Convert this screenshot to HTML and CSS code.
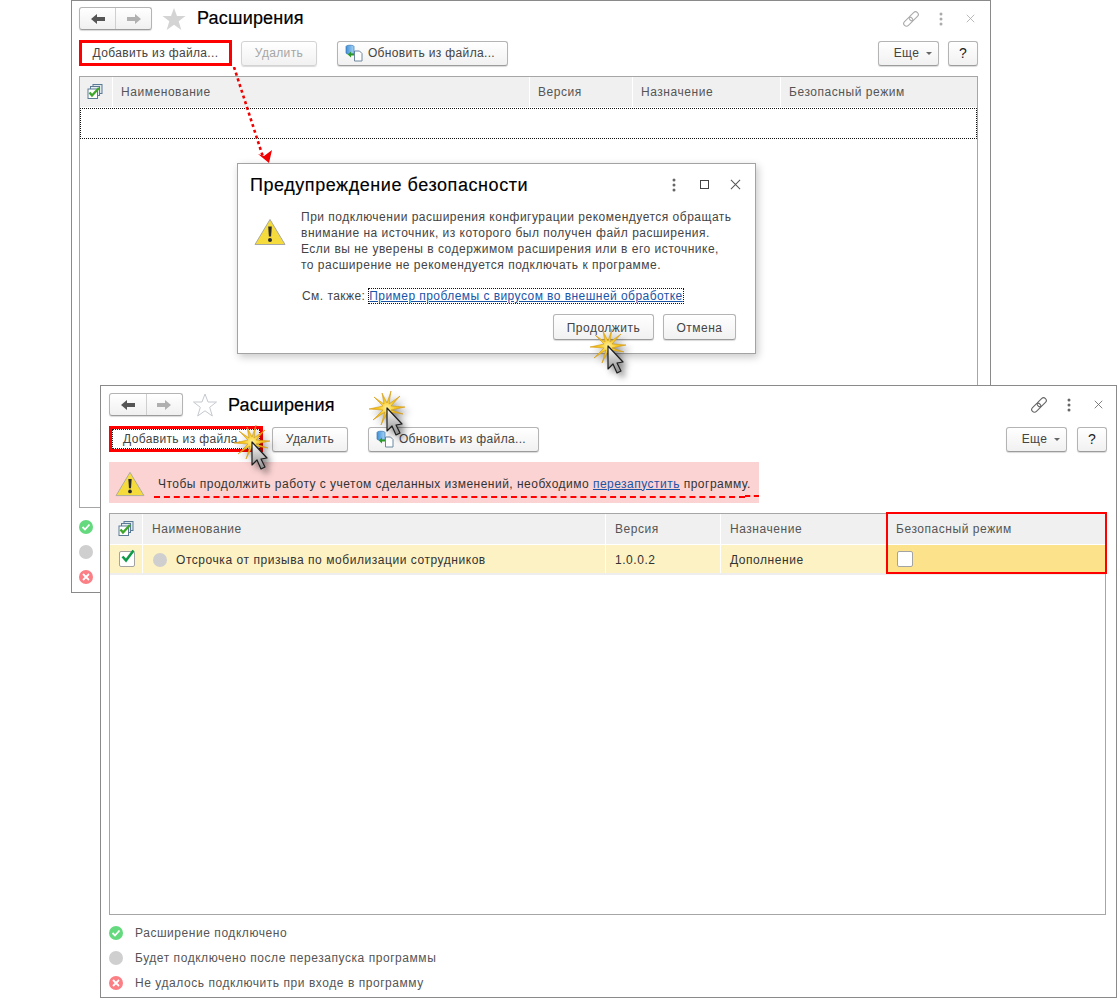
FILE: index.html
```html
<!DOCTYPE html>
<html lang="ru">
<head>
<meta charset="utf-8">
<title>Расширения</title>
<link rel="stylesheet" href="styles.css">
</head>
<body>
<svg class="defs" aria-hidden="true">
  <defs>
    <linearGradient id="curs" x1="0" y1="0" x2="0" y2="1"><stop offset="0" stop-color="#fff"/><stop offset="1" stop-color="#8a8a8a"/></linearGradient>
    <radialGradient id="burst"><stop offset="0" stop-color="#fff09a"/><stop offset="0.45" stop-color="#f6c822"/><stop offset="1" stop-color="#e5a00c"/></radialGradient>
    <linearGradient id="db" x1="0" y1="0" x2="1" y2="0"><stop offset="0" stop-color="#3f8fd8"/><stop offset="1" stop-color="#a8d4f5"/></linearGradient>
    <symbol id="i-pointer" viewBox="0 0 50 50">
      <polygon points="38,19 24,18 33,8 22,16 24,3 20,15 15,5 17,16 7,9 16,18 2,21 16,22 6,32 18,24 14,37 20,25 24,34 23,24 36,26 24,22" fill="url(#burst)" stroke="#d49a10" stroke-width=".6"/>
      <path d="M20 20V43L25 38L29 47L33 45L29 37L35 36Z" fill="url(#curs)" stroke="#1d1d1d" stroke-width="1.2" stroke-linejoin="round"/>
    </symbol>
    <symbol id="i-warn" viewBox="0 0 32 28">
      <path d="M16 1.5L31 26.5H1Z" fill="#f5dc3c" stroke="#a8a8a0" stroke-width="1" stroke-linejoin="round"/>
      <path d="M14.2 8.5h3.6l-.7 10h-2.2z" fill="#2c2c2c"/><circle cx="16" cy="22" r="2" fill="#2c2c2c"/>
    </symbol>
    <symbol id="i-left" viewBox="0 0 16 12"><path d="M1 6L7 1V4H15V8H7V11Z" fill="currentColor"/></symbol>
    <symbol id="i-right" viewBox="0 0 16 12"><path d="M15 6L9 1V4H1V8H9V11Z" fill="currentColor"/></symbol>
    <symbol id="i-star" viewBox="0 0 24 24"><path d="M12 1l3 8h8.500l-6.800 5.300 2.600 8.700L12 17.800 4.700 23l2.600-8.700L.5 9H9z"/></symbol>
    <symbol id="i-link" viewBox="0 0 18 18" fill="none" stroke="currentColor" stroke-width="1.100">
      <rect x="1" y="9" width="10.500" height="5.500" rx="2.750" transform="rotate(-45 6.250 11.750)"/>
      <rect x="6.500" y="3.500" width="10.500" height="5.500" rx="2.750" transform="rotate(-45 11.750 6.250)"/>
    </symbol>
    <symbol id="i-dots" viewBox="0 0 4 14"><circle cx="2" cy="2" r="1.500" fill="currentColor"/><circle cx="2" cy="7" r="1.500" fill="currentColor"/><circle cx="2" cy="12" r="1.500" fill="currentColor"/></symbol>
    <symbol id="i-close" viewBox="0 0 12 12"><path d="M1 1L11 11M11 1L1 11" stroke="currentColor" stroke-width="1.100" fill="none"/></symbol>
    <symbol id="i-update" viewBox="0 0 18 18">
      <path d="M9.500 7h5l2.500 2.500V17H9.500Z" fill="#fff" stroke="#6d87a0"/>
      <path d="M1 2.500C1 .8 9 .8 9 2.500V9C9 10.700 1 10.700 1 9Z" fill="url(#db)" stroke="#3a78b5" stroke-width=".7"/>
      <path d="M6 7.500L2.800 10.500L6 13.500V11.500H9V9.500H6Z" fill="#2b9a2b"/>
    </symbol>
    <symbol id="i-checkall" viewBox="0 0 16 16">
      <rect x="6" y=".5" width="9" height="9" fill="#dfe6ec" stroke="#5b7a96"/>
      <rect x="3.500" y="2.500" width="9" height="9" fill="#e8edf1" stroke="#5b7a96"/>
      <rect x="1" y="5" width="9.500" height="9.500" fill="#fff" stroke="#5b7a96"/>
      <path d="M2.500 8.500L5 11.500L12 4" fill="none" stroke="#3fa62c" stroke-width="2.400"/>
    </symbol>
    <symbol id="i-tick" viewBox="0 0 16 16"><path d="M3.500 7.500L7 11.500L14.500 1.500" fill="none" stroke="#0f9a4a" stroke-width="2.600"/></symbol>
    <symbol id="i-ok" viewBox="0 0 14 14"><circle cx="7" cy="7" r="7" fill="#64d97e"/><path d="M3.500 7L6 9.500L10.500 4.500" fill="none" stroke="#fff" stroke-width="1.800"/></symbol>
    <symbol id="i-wait" viewBox="0 0 14 14"><circle cx="7" cy="7" r="7" fill="#cfcfcf"/></symbol>
    <symbol id="i-fail" viewBox="0 0 14 14"><circle cx="7" cy="7" r="7" fill="#fb7f84"/><path d="M4 4L10 10M10 4L4 10" fill="none" stroke="#fff" stroke-width="1.800"/></symbol>
  </defs>
</svg>

<section class="window window-back">
  <header class="win-head">
    <div class="nav"><span class="nav-btn back"><svg class="ic-arrow"><use href="#i-left"/></svg></span><span class="nav-btn fwd"><svg class="ic-arrow"><use href="#i-right"/></svg></span></div>
    <svg class="ic-star star-solid"><use href="#i-star"/></svg>
    <h1 class="win-title">Расширения</h1>
    <div class="win-tools muted">
      <svg class="ic-link"><use href="#i-link"/></svg>
      <svg class="ic-dots"><use href="#i-dots"/></svg>
      <svg class="ic-close"><use href="#i-close"/></svg>
    </div>
  </header>
  <div class="toolbar">
    <button class="btn flagged w-add">Добавить из файла...</button>
    <button class="btn disabled w-del">Удалить</button>
    <button class="btn w-upd gap-lg"><svg class="ic-update"><use href="#i-update"/></svg>Обновить из файла...</button>
    <span class="spring"></span>
    <button class="btn w-more">Еще<i class="caret"></i></button>
    <button class="btn w-help">?</button>
  </div>
  <div class="table table-back">
    <div class="thead cols-back">
      <div class="th th-icon"><svg class="ic-checkall"><use href="#i-checkall"/></svg></div>
      <div class="th">Наименование</div><div class="th">Версия</div><div class="th">Назначение</div><div class="th">Безопасный режим</div>
    </div>
    <div class="empty-row"></div>
  </div>
  <div class="legend legend-back">
    <div class="legend-row"><svg class="ic-state"><use href="#i-ok"/></svg></div>
    <div class="legend-row"><svg class="ic-state"><use href="#i-wait"/></svg></div>
    <div class="legend-row"><svg class="ic-state"><use href="#i-fail"/></svg></div>
  </div>
</section>

<section class="dialog">
  <header class="dlg-head">
    <h2 class="dlg-title">Предупреждение безопасности</h2>
    <svg class="ic-dots"><use href="#i-dots"/></svg>
    <span class="ic-square"></span>
    <svg class="ic-close ic-close-lg"><use href="#i-close"/></svg>
  </header>
  <div class="dlg-body">
    <svg class="ic-warn"><use href="#i-warn"/></svg>
    <div class="dlg-text">
      <p class="dlg-para">При подключении расширения конфигурации рекомендуется обращать<br>внимание на источник, из которого был получен файл расширения.<br>Если вы не уверены в содержимом расширения или в его источнике,<br>то расширение не рекомендуется подключать к программе.</p>
      <p class="dlg-see">См. также: <a class="link link-focus">Пример проблемы с вирусом во внешней обработке</a></p>
    </div>
  </div>
  <div class="dlg-actions">
    <button class="btn w-cont">Продолжить</button>
    <button class="btn w-cancel">Отмена</button>
  </div>
</section>

<section class="window window-front">
  <header class="win-head">
    <div class="nav"><span class="nav-btn back"><svg class="ic-arrow"><use href="#i-left"/></svg></span><span class="nav-btn fwd"><svg class="ic-arrow"><use href="#i-right"/></svg></span></div>
    <svg class="ic-star star-line"><use href="#i-star"/></svg>
    <h1 class="win-title">Расширения</h1>
    <div class="win-tools">
      <svg class="ic-link"><use href="#i-link"/></svg>
      <svg class="ic-dots"><use href="#i-dots"/></svg>
      <svg class="ic-close"><use href="#i-close"/></svg>
    </div>
  </header>
  <div class="toolbar">
    <button class="btn flagged w-add2"><span class="focus-ring">Добавить из файла...</span></button>
    <button class="btn w-del">Удалить</button>
    <button class="btn w-upd gap-lg"><svg class="ic-update"><use href="#i-update"/></svg>Обновить из файла...</button>
    <span class="spring"></span>
    <button class="btn w-more">Еще<i class="caret"></i></button>
    <button class="btn w-help gap-help">?</button>
  </div>
  <div class="notice">
    <svg class="ic-warn ic-warn-sm"><use href="#i-warn"/></svg>
    <span class="notice-text">Чтобы продолжить работу с учетом сделанных изменений, необходимо <a class="link">перезапустить</a> программу.</span>
    <i class="dash dash-main"></i><i class="dash dash-tail"></i>
  </div>
  <div class="table table-front">
    <div class="thead cols-front">
      <div class="th th-icon"><svg class="ic-checkall"><use href="#i-checkall"/></svg></div>
      <div class="th">Наименование</div><div class="th">Версия</div><div class="th">Назначение</div><div class="th">Безопасный режим</div>
    </div>
    <div class="trow cols-front">
      <div class="td td-icon"><span class="checkbox"><svg class="ic-tick"><use href="#i-tick"/></svg></span></div>
      <div class="td"><svg class="ic-state ic-row"><use href="#i-wait"/></svg>Отсрочка от призыва по мобилизации сотрудников</div>
      <div class="td">1.0.0.2</div>
      <div class="td">Дополнение</div>
      <div class="td td-hot"><span class="checkbox"></span></div>
    </div>
    <div class="red-col"></div>
  </div>
  <div class="legend">
    <div class="legend-row"><svg class="ic-state"><use href="#i-ok"/></svg>Расширение подключено</div>
    <div class="legend-row"><svg class="ic-state"><use href="#i-wait"/></svg>Будет подключено после перезапуска программы</div>
    <div class="legend-row"><svg class="ic-state"><use href="#i-fail"/></svg>Не удалось подключить при входе в программу</div>
  </div>
</section>

<svg class="arrow" viewBox="0 0 50 110" aria-hidden="true">
  <path d="M4 0L33 90" stroke="#f00000" stroke-width="2.600" stroke-dasharray="3 3" fill="none"/>
  <path d="M39 96L28 87L34 89L42 83Z" fill="#f00000"/>
</svg>
<svg class="pointer p-dialog" aria-hidden="true"><use href="#i-pointer"/></svg>
<svg class="pointer p-title" aria-hidden="true"><use href="#i-pointer"/></svg>
<svg class="pointer p-add" aria-hidden="true"><use href="#i-pointer"/></svg>
</body>
</html>
```

FILE: styles.css
```css
* { box-sizing: border-box; }
html, body { margin: 0; padding: 0; }
body {
  position: relative;
  width: 1118px;
  height: 1001px;
  overflow: hidden;
  background: #fff;
  color: #444;
  font-family: "Liberation Sans", Arial, sans-serif;
  font-size: 12px;
  letter-spacing: .55px;
}
.defs { position: absolute; width: 0; height: 0; }

/* windows on the canvas */
.window { position: absolute; background: #fff; border: 1px solid #8a8a8a; }
.window-back { left: 71px; top: 0; width: 920px; height: 593px; padding: 6px 12px 0 7px; }
.window-front { left: 100px; top: 385px; width: 1017px; height: 613px; padding: 7px 9px 0 8px; }

.win-head { display: flex; align-items: center; height: 23px; }
.nav { display: flex; width: 74px; height: 23px; border: 1px solid #b4b4b4; border-bottom-color: #9c9c9c; border-radius: 3px; background: linear-gradient(#fff, #f0f0f0); box-shadow: 0 1px 1px rgba(0,0,0,.15); }
.window-back .nav { width: 73px; }
.nav-btn { flex: 1; display: flex; align-items: center; justify-content: center; }
.nav-btn + .nav-btn { border-left: 1px solid #cfcfcf; }
.back { color: #555; }
.fwd { color: #b0b0b0; }
.ic-arrow { width: 16px; height: 12px; }
.ic-star { width: 24px; height: 24px; margin-left: 10px; flex: none; }
.star-solid { fill: #d4d4d4; }
.star-line { fill: #fff; stroke: #c4c9d0; stroke-width: 1; }
.win-title { margin: 1px 0 0 11px; font-size: 18px; font-weight: 400; letter-spacing: .2px; color: #000; line-height: 23px; -webkit-text-stroke: .2px #000; }
.window-back .win-title { margin-top: 0; }
.win-tools { margin-left: auto; display: flex; align-items: center; color: #666; }
.muted { color: #ababab; }
.ic-link { width: 18px; height: 18px; }
.ic-dots { width: 4px; height: 14px; margin-left: 19px; }
.ic-close { width: 9px; height: 9px; margin-left: 23px; margin-right: 4px; }
.muted .ic-close { margin-left: 23px; margin-right: 3px; }

/* toolbar */
.toolbar { display: flex; align-items: center; height: 26px; margin-top: 10px; letter-spacing: .35px; }
.btn {
  display: inline-flex; align-items: center; justify-content: center;
  height: 25px; padding: 0; flex: none;
  border: 1px solid #b4b4b4; border-bottom-color: #9c9c9c; border-radius: 3px;
  background: linear-gradient(#fff, #f1f1f1);
  box-shadow: 0 1px 1px rgba(0,0,0,.15);
  font: inherit; letter-spacing: inherit; color: #444;
}
.btn.disabled { color: #a6a6a6; border-color: #d3d3d3; }
.btn.flagged { height: 26px; border: 3px solid #f00; border-radius: 0; box-shadow: none; background: #fff; }
.w-add { width: 153px; }
.w-add2 { width: 154px; padding: 0; }
.w-del { width: 76px; margin-left: 9px; }
.w-upd { width: 171px; padding-right: 5px; }
.gap-lg { margin-left: 20px; }
.w-more { width: 61px; padding-left: 9px; }
.w-help { width: 30px; margin-left: 9px; color: #222; font-size: 14px; }
.gap-help { margin-left: 10px; }
.spring { flex: 1; }
.ic-update { width: 18px; height: 18px; margin-right: 5px; }
.caret { width: 0; height: 0; margin-left: 7px; border: 3px solid transparent; border-top: 3px solid #666; border-bottom: 0; }
.focus-ring { display: flex; align-items: center; justify-content: center; width: 148px; height: 20px; border: 1px dotted #222; }

/* tables */
.table { position: relative; margin-top: 10px; border: 1px solid #a6a6a6; background: #fff; }
.table-back { height: 432px; }
.table-front { height: 402px; margin-top: 10px; margin-right: 1px; }
.thead, .trow { display: grid; }
.cols-back { grid-template-columns: 33px 417px 103px 148px 1fr; }
.cols-front { grid-template-columns: 33px 463px 115px 166px 1fr; }
.thead { height: 30px; }
.th { display: flex; align-items: center; padding-left: 8px; background: #f0f0f0; border-right: 1px solid #fff; color: #555; }
.cols-front .th { padding-left: 9px; }
.th:last-child { border-right: 0; }
.cols-front .th-icon, .th-icon { padding-left: 7px; }
.cols-front .th-icon { padding-left: 8px; }
.ic-checkall { width: 16px; height: 16px; }
.empty-row { height: 31px; margin-top: 1px; border: 1px dotted #111; }
.trow { height: 28px; margin-top: 1px; border-bottom: 2px solid #eee; box-sizing: content-box; }
.td { display: flex; align-items: center; padding: 1px 0 0 9px; background: #fdf2c4; border-right: 1px solid #fff; color: #333; }
.td:last-child { border-right: 0; }
.td-icon { padding: 0 0 0 9px; }
.td-hot { background: #fde28c; padding: 0 0 0 10px; }
.checkbox { position: relative; display: block; width: 16px; height: 16px; background: #fff; border: 1px solid #a3a3a3; border-radius: 2px; }
.ic-tick { position: absolute; left: -1px; top: -3px; width: 16px; height: 16px; }
.ic-state { width: 14px; height: 14px; flex: none; margin-right: 12px; }
.ic-row { margin-left: 1px; margin-right: 9px; }
.red-col { position: absolute; right: -2px; top: -2px; width: 221px; height: 62px; border: 2px solid #f00; }

/* legend */
.legend { margin-top: 5px; }
.legend-row { display: flex; align-items: center; height: 25px; color: #555; }
.legend-back { margin-top: 6px; }

/* notice */
.notice { position: relative; display: flex; align-items: center; width: 650px; height: 41px; margin-top: 10px; padding-left: 6px; background: #fbd3d3; color: #333; letter-spacing: .48px; }
.ic-warn { width: 32px; height: 28px; flex: none; }
.ic-warn-sm { width: 30px; height: 26px; margin-top: 2px; }
.notice-text { margin-left: 13px; margin-top: 2px; white-space: nowrap; }
.dash { position: absolute; border-top: 2px dashed #f00; }
.dash-main { left: 45px; top: 34px; width: 591px; }
.dash-tail { left: 636px; top: 33px; width: 14px; }
.link { color: #1a55a8; text-decoration: underline; }
.link-focus { outline: 1px dotted #111; }

/* dialog */
.dialog { position: absolute; left: 237px; top: 163px; width: 519px; height: 191px; background: #fff; border: 1px solid #a3a3a3; box-shadow: 2px 3px 8px rgba(0,0,0,.22); letter-spacing: .5px; }
.dlg-head { display: flex; align-items: center; height: 41px; padding: 0 14px 0 12px; color: #666; }
.dlg-title { flex: 1; margin: 2px 0 0; font-size: 18px; font-weight: 400; letter-spacing: .56px; color: #000; -webkit-text-stroke: .15px #000; }
.dlg-head .ic-dots { margin: 0; }
.ic-square { width: 9px; height: 9px; margin-left: 24px; border: 1px solid #444; }
.ic-close-lg { width: 11px; height: 11px; margin-left: 21px; margin-right: 0; color: #555; }
.dlg-body { display: flex; padding-left: 16px; }
.dlg-body .ic-warn { margin-top: 13px; }
.dlg-text { margin-left: 15px; padding-top: 4px; }
.dlg-para { margin: 0; line-height: 16px; white-space: nowrap; }
.dlg-see { margin: 15px 0 0; line-height: 16px; white-space: nowrap; letter-spacing: .45px; padding-left: 1px; }
.dlg-actions { display: flex; justify-content: flex-end; gap: 9px; margin-top: 10px; padding-right: 19px; }
.w-cont { width: 101px; height: 26px; padding-top: 1px; }
.w-cancel { width: 73px; height: 26px; padding-top: 1px; }

/* annotations lying over the windows */
.arrow { position: absolute; left: 230px; top: 67px; width: 50px; height: 110px; }
.pointer { position: absolute; width: 50px; height: 50px; filter: drop-shadow(4px 4px 3px rgba(0,0,0,.45)); }
.p-dialog { left: 588px; top: 326px; }
.p-title { left: 367px; top: 388px; }
.p-add { left: 232px; top: 422px; }
```
